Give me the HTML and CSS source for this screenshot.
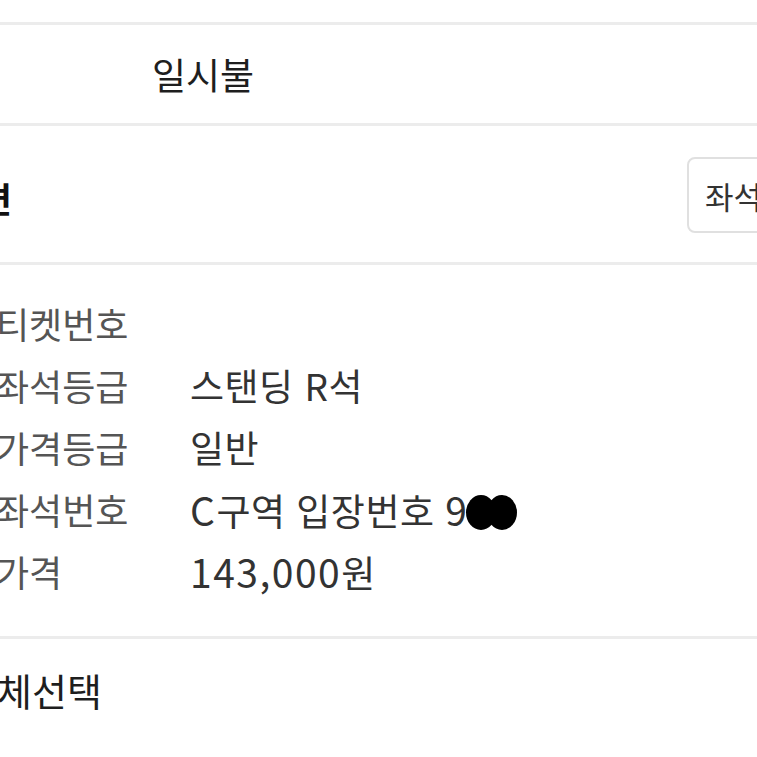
FILE: index.html
```html
<!DOCTYPE html>
<html lang="ko">

<head>
    <meta charset="UTF-8">
    <meta name="viewport" content="width=device-width, initial-scale=1.0">
    <title>예매 정보</title>
    <link rel="stylesheet" href="styles.css">
</head>

<body>
    <div class="top-space"></div>

    <!-- 결제 방식 -->
    <div class="pay-row">
        <span class="pay-label">할부</span>
        <span class="pay-value">일시불</span>
    </div>

    <!-- 티켓 정보 헤더 -->
    <div class="section-head">
        <h2 class="section-title">티켓 정보 변</h2>
        <button class="seat-btn">좌석보기</button>
    </div>

    <!-- 티켓 상세 -->
    <div class="info-list">
        <div class="info-row">
            <span class="info-label">티켓번호</span>
            <span class="info-value"></span>
        </div>
        <div class="info-row">
            <span class="info-label">좌석등급</span>
            <span class="info-value">스탠딩 R석</span>
        </div>
        <div class="info-row">
            <span class="info-label">가격등급</span>
            <span class="info-value">일반</span>
        </div>
        <div class="info-row">
            <span class="info-label">좌석번호</span>
            <span class="info-value"><span class="num">C</span>구역 입장번호 <span class="num">9</span><span class="blot"></span><span class="blot"></span></span>
        </div>
        <div class="info-row">
            <span class="info-label">가격</span>
            <span class="info-value"><span class="num">143,000</span>원</span>
        </div>
    </div>

    <!-- 전체선택 -->
    <div class="select-all">
        <span class="select-text">전체선택</span>
    </div>
</body>

</html>
```

FILE: styles.css
```css
/* 전체 */
body {
    margin: 0;
    background: #ffffff;
    font-family: "Noto Sans CJK KR", "Noto Sans", sans-serif;
    color: #222222;
    overflow: hidden;
    width: 757px;
    height: 757px;
}

.top-space {
    height: 22px;
    border-bottom: 3px solid #ececec;
}

/* 결제 방식 */
.pay-row {
    height: 98px;
    display: flex;
    align-items: center;
    border-bottom: 3px solid #ececec;
}

.pay-label {
    width: 152px;
    margin-left: -120px;
    font-size: 37px;
    color: #444444;
}

.pay-value {
    margin-left: 120px;
    font-size: 37px;
    color: #1e1e1e;
}

/* 섹션 헤더 */
.section-head {
    height: 136px;
    display: flex;
    align-items: center;
    justify-content: space-between;
    border-bottom: 3px solid #ececec;
}

.section-title {
    width: 230px;
    margin: 6px 0 0 -218px;
    text-align: right;
    font-size: 35px;
    font-weight: bold;
    color: #111111;
    white-space: nowrap;
}

.seat-btn {
    margin-right: -60px;
    margin-top: 2px;
    height: 76px;
    width: 130px;
    padding: 0 0 0 16px;
    text-align: left;
    background: #ffffff;
    border: 2px solid #e0e0e0;
    border-radius: 8px;
    font-family: inherit;
    font-size: 31px;
    color: #333333;
    white-space: nowrap;
}

/* 티켓 상세 */
.info-list {
    padding: 27px 0 34px 0;
    border-bottom: 3px solid #ececec;
}

.info-row {
    height: 62px;
    display: flex;
    align-items: center;
    font-size: 36px;
}

.info-label {
    width: 194px;
    margin-left: -4px;
    color: #555555;
    flex-shrink: 0;
}

.info-value {
    color: #333333;
    font-size: 37px;
    letter-spacing: 0.5px;
    white-space: nowrap;
}

.num {
    font-size: 39px;
    letter-spacing: 1.5px;
}

/* 가림 표시 */
.blot {
    display: inline-block;
    width: 30px;
    height: 35px;
    background: #000000;
    border-radius: 50%;
    margin-left: -3px;
    vertical-align: -4px;
}

.blot + .blot {
    margin-left: -9px;
}

/* 전체선택 */
.select-all {
    height: 120px;
    display: flex;
    align-items: center;
}

.select-text {
    margin-left: -38px;
    margin-top: -20px;
    font-size: 38px;
    color: #1e1e1e;
}
```
